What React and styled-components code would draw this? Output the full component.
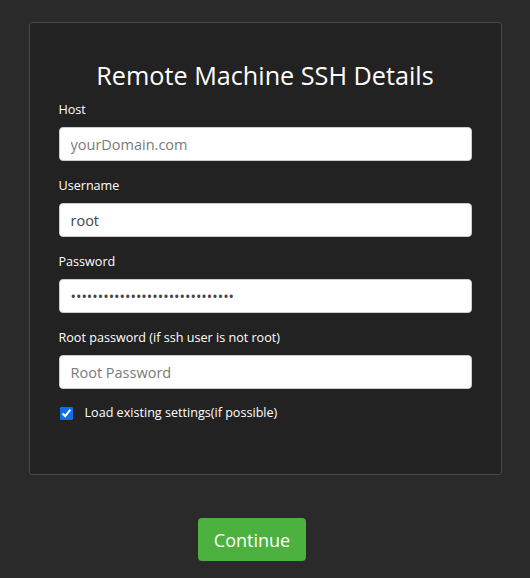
import React, { useState } from 'react';
import styled, { createGlobalStyle } from 'styled-components';

const GlobalStyle = createGlobalStyle`
  html, body {
    margin: 0;
    padding: 0;
    background: #2a2a2a;
    font-family: "Open Sans", "Noto Sans", sans-serif;
  }
`;

const Page = styled.div`
  display: flex;
  flex-direction: column;
  align-items: center;
  padding-top: 22px;
`;

const Card = styled.form`
  box-sizing: border-box;
  width: 473px;
  background: #222222;
  border: 1px solid #4a4a4e;
  border-radius: 3px;
  padding: 38px 29px 52px;
  display: flex;
  flex-direction: column;
`;

const Title = styled.h2`
  margin: 0 0 10px;
  text-align: center;
  color: #ffffff;
  font-weight: 400;
  font-size: 25.2px;
  line-height: 29px;
`;

const Field = styled.div`
  display: flex;
  flex-direction: column;
  margin-bottom: 15px;
`;

const Label = styled.label`
  color: #ffffff;
  font-size: 12.6px;
  line-height: 18px;
  padding-top: 1px;
  margin-bottom: 8px;
`;

const Input = styled.input`
  box-sizing: border-box;
  height: 34px;
  width: 100%;
  border: 1px solid #c8ccd0;
  border-radius: 4px;
  background: #ffffff;
  padding: 0 11px;
  font-family: inherit;
  font-size: 14.5px;
  color: #444;
  outline: none;

  &::placeholder {
    color: #7a7a7a;
  }
`;

const CheckRow = styled.label`
  display: flex;
  align-items: center;
  gap: 12px;
  color: #ffffff;
  font-size: 12.6px;
  line-height: 18px;
`;

const Check = styled.input`
  width: 13px;
  height: 13px;
  margin: 0 0 0 1px;
  accent-color: #0b6cf0;
`;

const ContinueButton = styled.button`
  margin-top: 43px;
  margin-right: 26px;
  width: 108px;
  height: 43px;
  border: none;
  border-radius: 4px;
  background: #4cb13f;
  color: #ffffff;
  font-family: inherit;
  font-size: 18px;
  cursor: pointer;
`;

const fields = [
  { label: 'Host', placeholder: 'yourDomain.com', type: 'text', value: '' },
  { label: 'Username', placeholder: 'Username', type: 'text', value: 'root' },
  { label: 'Password', placeholder: 'Password', type: 'password', value: 'a-very-long-ssh-password-123456' },
  { label: 'Root password (if ssh user is not root)', placeholder: 'Root Password', type: 'password', value: '' },
];

const App = () => {
  const [values, setValues] = useState(fields.map((f) => f.value.slice(0, 30)));
  const [loadExisting, setLoadExisting] = useState(true);

  return (
    <Page>
      <GlobalStyle />
      <Card onSubmit={(e) => e.preventDefault()}>
        <Title>Remote Machine SSH Details</Title>
        {fields.map((f, i) => (
          <Field key={f.label}>
            <Label>{f.label}</Label>
            <Input
              type={f.type}
              placeholder={f.placeholder}
              value={values[i]}
              onChange={(e) => setValues(values.map((v, j) => (j === i ? e.target.value : v)))}
            />
          </Field>
        ))}
        <CheckRow>
          <Check
            type="checkbox"
            checked={loadExisting}
            onChange={(e) => setLoadExisting(e.target.checked)}
          />
          Load existing settings(if possible)
        </CheckRow>
      </Card>
      <ContinueButton type="button">Continue</ContinueButton>
    </Page>
  );
};

export default App;
